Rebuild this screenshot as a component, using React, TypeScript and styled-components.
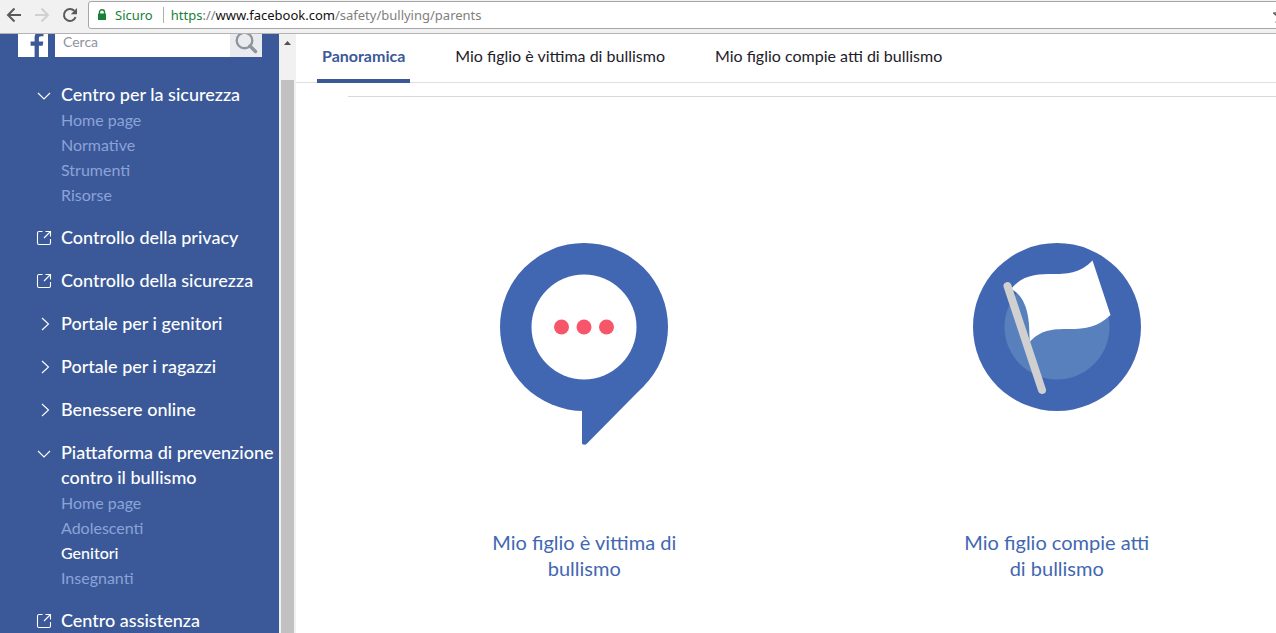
import React, { useState } from "react";
import styled, { createGlobalStyle } from "styled-components";

const GlobalStyle = createGlobalStyle`
  *, *::before, *::after { box-sizing: border-box; }
  body { margin: 0; background: #fff; font-family: "Noto Sans", "Open Sans", sans-serif; }
  button, input { font-family: inherit; }
  a { text-decoration: none; }
`;

const Browser = styled.div`
  display: flex;
  flex-direction: column;
  height: 100vh;
  overflow: hidden;
`;

const Toolbar = styled.header`
  display: flex;
  flex: none;
  height: 34px;
  padding: 1px 0 4px 5px;
  overflow: hidden;
  background: #f2f1f2;
  border-bottom: 1px solid #b3b3b3;
`;

const ToolButton = styled.button`
  display: flex;
  align-items: center;
  justify-content: center;
  width: 28px;
  padding: 0 10px 0 0;
  border: 0;
  background: none;
  color: #5a5a5a;
  &:disabled { color: #d0d0d0; }
`;

const AddressBar = styled.div`
  display: flex;
  flex: 1;
  align-items: center;
  margin: 0 -14px 0 -1px;
  padding: 0 0 0 8px;
  border: 1px solid #a6a6a6;
  border-radius: 3px;
  background: #fff;
  font-size: 13px;
  line-height: 18px;
  color: #808080;
`;

const Secure = styled.button`
  display: flex;
  align-items: center;
  gap: 8px;
  padding: 0 10px 0 0;
  border: 0;
  border-right: 1px solid #b0b0b0;
  background: none;
  font-size: 13px;
  line-height: 16px;
  color: #188038;
`;

const Url = styled.div`
  flex: 1;
  padding-left: 7px;
  white-space: nowrap;
`;

const Scheme = styled.span`color: #188038;`;
const Host = styled.span`color: #111;`;

const StarButton = styled.button`
  display: flex;
  padding: 0;
  border: 0;
  background: none;
`;

const Page = styled.div`
  display: flex;
  flex: 1;
  min-height: 0;
  font-family: Lato, "Noto Sans", sans-serif;
`;

const Sidebar = styled.aside`
  flex: none;
  width: 279px;
  overflow: hidden;
  background: #3b5998;
`;

const SearchRow = styled.form`
  display: flex;
  align-items: flex-end;
  height: 23px;
  padding: 0 17px 0 18px;
  overflow: hidden;
`;

const LogoLink = styled.a`
  display: flex;
  margin-right: 7px;
`;

const SearchInput = styled.input`
  flex: 1;
  min-width: 0;
  height: 30px;
  padding: 0 8px 2px;
  border: 0;
  background: #fff;
  font-size: 14px;
  &::placeholder { color: #90949c; opacity: 1; }
`;

const SearchButton = styled.button`
  display: flex;
  align-items: center;
  justify-content: center;
  width: 32px;
  height: 30px;
  padding: 0;
  border: 0;
  background: #e9ebee;
`;

const Nav = styled.nav`
  display: flex;
  flex-direction: column;
  gap: 18px;
  padding: 25px 0 0 36px;
`;

const Section = styled.div`
  display: flex;
  flex-direction: column;
`;

const SectionHead = styled.button`
  display: flex;
  align-items: flex-start;
  padding: 0;
  border: 0;
  background: none;
  color: #fff;
  font-size: 18px;
  font-weight: 500;
  line-height: 25px;
  text-align: left;
  white-space: pre;
  cursor: pointer;
`;

const IconBox = styled.span`
  display: flex;
  flex: none;
  align-items: center;
  width: 25px;
  height: 25px;
`;

const SubLink = styled.a<{ $current?: boolean }>`
  padding-left: 25px;
  color: ${(p) => (p.$current ? "#fff" : "#8ba3d9")};
  font-size: 16px;
  font-weight: ${(p) => (p.$current ? 500 : 400)};
  line-height: 25px;
`;

const ScrollTrack = styled.div`
  display: flex;
  flex-direction: column;
  align-items: center;
  flex: none;
  width: 17px;
  background: #f1f1f1;
`;

const ScrollUp = styled.button`
  display: flex;
  align-items: center;
  justify-content: center;
  height: 18px;
  width: 17px;
  padding: 0;
  border: 0;
  background: none;
`;

const ScrollThumb = styled.div`
  flex: 1;
  width: 13px;
  margin-top: 28px;
  background: #c1c1c1;
`;

const Content = styled.main`
  flex: 1;
  min-width: 0;
  overflow: hidden;
`;

const Tabs = styled.nav`
  display: flex;
  gap: 40px;
  height: 49px;
  padding-left: 21px;
  border-bottom: 1px solid #dddfe2;
`;

const Tab = styled.a<{ $active?: boolean }>`
  height: 49px;
  padding: 9px 5px 0;
  border-bottom: 4px solid ${(p) => (p.$active ? "#3b5998" : "transparent")};
  color: ${(p) => (p.$active ? "#3b5998" : "#1d2129")};
  font-size: 16px;
  font-weight: ${(p) => (p.$active ? 700 : 400)};
  line-height: 25px;
  white-space: nowrap;
`;

const Cards = styled.section`
  display: grid;
  grid-template-columns: 1fr 1fr;
  margin: 13px -17px 0 52px;
  padding-top: 146px;
  border-top: 1px solid #d8d8d8;
`;

const Card = styled.a`
  display: flex;
  flex-direction: column;
  align-items: center;
  gap: 84px;
  color: #4267b2;
`;

const CardTitle = styled.h2`
  width: 200px;
  margin: 0;
  font-size: 20px;
  font-weight: 400;
  line-height: 26px;
  text-align: center;
`;

const BackIcon = () => (
  <svg width="16" height="16" viewBox="0 0 16 16" fill="none" stroke="currentColor" strokeWidth="2" aria-hidden="true">
    <path d="M15 8H2.500M8.500 1.500L2 8l6.500 6.500" />
  </svg>
);
const ForwardIcon = () => (
  <svg width="16" height="16" viewBox="0 0 16 16" fill="none" stroke="currentColor" strokeWidth="2" aria-hidden="true">
    <path d="M1 8h12.500M7.500 1.500L14 8l-6.500 6.500" />
  </svg>
);
const ReloadIcon = () => (
  <svg width="16" height="16" viewBox="0 0 16 16" aria-hidden="true">
    <path d="M13.600 10A6 6 0 1 1 12.300 3.800" fill="none" stroke="currentColor" strokeWidth="2" />
    <path d="M15 1v6.200H8.800z" fill="currentColor" />
  </svg>
);
const LockIcon = () => (
  <svg width="10" height="12" viewBox="0 0 10 12" aria-hidden="true">
    <path d="M2.500 6V3.200a2.500 2.500 0 0 1 5 0V6" fill="none" stroke="#188038" strokeWidth="1.400" />
    <rect x="1" y="4.500" width="8" height="6.500" rx="0.600" fill="#188038" />
  </svg>
);
const StarIcon = () => (
  <svg width="16" height="16" viewBox="0 0 16 16" fill="none" stroke="#5a5a5a" strokeWidth="1.500" aria-hidden="true">
    <path d="M8 1l2.100 4.700 5.100.5-3.900 3.400 1.200 5L8 12l-4.500 2.600 1.200-5L.8 6.200l5.100-.5z" />
  </svg>
);
const LogoIcon = () => (
  <svg width="30" height="30" viewBox="0 0 30 30" aria-hidden="true">
    <path d="M0 0h30v30H0z" fill="#fff" />
    <path d="M16.600 30V18.700h-4v-4.200h4v-3.900c0-4 2.400-6.100 6-6.100 1.400 0 2.500.1 2.900.2v4.500h-2.300c-1.900 0-2.300.9-2.300 2.300v3h4.400l-.6 4.200h-3.800V30z" fill="#3b5998" />
  </svg>
);
const SearchIcon = () => (
  <svg width="24" height="24" viewBox="0 0 24 24" fill="none" stroke="#90949c" aria-hidden="true">
    <circle cx="10.500" cy="10.500" r="7.800" strokeWidth="2.400" />
    <path d="M16 16l5.500 5.500" strokeWidth="3.400" strokeLinecap="round" />
  </svg>
);
const DownIcon = () => (
  <svg width="16" height="16" viewBox="0 0 16 16" fill="none" stroke="#fff" strokeWidth="1.100" aria-hidden="true">
    <path d="M2 6l6 6 6-6" />
  </svg>
);
const RightIcon = () => (
  <svg width="16" height="16" viewBox="0 0 16 16" fill="none" stroke="#fff" strokeWidth="1.100" aria-hidden="true">
    <path d="M6 2l6.500 6L6 14" />
  </svg>
);
const ExternalIcon = () => (
  <svg width="16" height="16" viewBox="0 0 16 16" fill="none" stroke="#fff" strokeWidth="1.100" aria-hidden="true">
    <path d="M6.500 1.500H3q-1.500 0-1.500 1.500v10q0 1.500 1.500 1.500h10q1.500 0 1.500-1.500V9M9.500 1.500h5v5M14.500 1.500L8 8" />
  </svg>
);
const ArrowUpIcon = () => (
  <svg width="7" height="4" viewBox="0 0 7 4" aria-hidden="true">
    <path d="M0 4L3.500 0 7 4z" fill="#505050" />
  </svg>
);
const BubblePicture = () => (
  <svg width="168" height="202" viewBox="0 0 168 202" aria-hidden="true">
    <circle cx="84" cy="84" r="84" fill="#4267b2" />
    <path d="M84 84L144 142.800L87 200.500q-2 2-4.500.8-.5-.5-.5-1.500V84z" fill="#4267b2" />
    <circle cx="84" cy="84" r="52.500" fill="#fff" />
    <circle cx="61.500" cy="84" r="7.500" fill="#f7566a" />
    <circle cx="84" cy="84" r="7.500" fill="#f7566a" />
    <circle cx="106.500" cy="84" r="7.500" fill="#f7566a" />
  </svg>
);
const FlagPicture = () => (
  <svg width="168" height="202" viewBox="0 0 168 202" aria-hidden="true">
    <circle cx="84" cy="84" r="84" fill="#4267b2" />
    <circle cx="84" cy="84" r="52.500" fill="#5880bd" />
    <path d="M38 46C50 31 66 31 80 31C98 31 108 29 119.500 17.500L137.500 72C125 84 113 86 96 86C78 86 68 87 56.500 99C57 78 55 54 38 46z" fill="#fff" />
    <path d="M34.500 43L69 147" stroke="#d0d0d0" strokeWidth="8" strokeLinecap="round" />
  </svg>
);

type Kind = "group" | "external";
interface Entry {
  title: string;
  kind: Kind;
  links?: string[];
}

const entries: Entry[] = [
  { title: "Centro per la sicurezza", kind: "group", links: ["Home page", "Normative", "Strumenti", "Risorse"] },
  { title: "Controllo della privacy", kind: "external" },
  { title: "Controllo della sicurezza", kind: "external" },
  { title: "Portale per i genitori", kind: "group" },
  { title: "Portale per i ragazzi", kind: "group" },
  { title: "Benessere online", kind: "group" },
  {
    title: "Piattaforma di prevenzione\ncontro il bullismo",
    kind: "group",
    links: ["Home page", "Adolescenti", "Genitori", "Insegnanti"],
  },
  { title: "Centro assistenza", kind: "external" },
];

function NavSection({ entry }: { entry: Entry }) {
  const [open, setOpen] = useState(Boolean(entry.links));
  const external = entry.kind === "external";
  return (
    <Section>
      <SectionHead
        {...(external
          ? { as: "a" as const, href: "#" }
          : { type: "button" as const, "aria-expanded": open, onClick: () => setOpen(!open) })}
      >
        <IconBox>{external ? <ExternalIcon /> : open ? <DownIcon /> : <RightIcon />}</IconBox>
        {entry.title}
      </SectionHead>
      {open &&
        entry.links?.map((link) => (
          <SubLink key={link} href="#" $current={link === "Genitori"}>
            {link}
          </SubLink>
        ))}
    </Section>
  );
}

export default function App() {
  return (
    <Browser>
      <GlobalStyle />
      <Toolbar>
        <ToolButton aria-label="Indietro"><BackIcon /></ToolButton>
        <ToolButton aria-label="Avanti" disabled><ForwardIcon /></ToolButton>
        <ToolButton aria-label="Ricarica"><ReloadIcon /></ToolButton>
        <AddressBar>
          <Secure><LockIcon />Sicuro</Secure>
          <Url>
            <Scheme>https</Scheme>://<Host>www.facebook.com</Host>/safety/bullying/parents
          </Url>
          <StarButton aria-label="Preferiti"><StarIcon /></StarButton>
        </AddressBar>
      </Toolbar>
      <Page>
        <Sidebar>
          <SearchRow role="search">
            <LogoLink href="#" aria-label="Facebook"><LogoIcon /></LogoLink>
            <SearchInput type="text" placeholder="Cerca" aria-label="Cerca" />
            <SearchButton type="button" aria-label="Avvia ricerca"><SearchIcon /></SearchButton>
          </SearchRow>
          <Nav>
            {entries.map((entry) => (
              <NavSection key={entry.title} entry={entry} />
            ))}
          </Nav>
        </Sidebar>
        <ScrollTrack>
          <ScrollUp aria-label="Scorri in alto"><ArrowUpIcon /></ScrollUp>
          <ScrollThumb />
        </ScrollTrack>
        <Content>
          <Tabs>
            <Tab href="#" $active>Panoramica</Tab>
            <Tab href="#">Mio figlio è vittima di bullismo</Tab>
            <Tab href="#">Mio figlio compie atti di bullismo</Tab>
          </Tabs>
          <Cards>
            <Card href="#">
              <BubblePicture />
              <CardTitle>Mio figlio è vittima di bullismo</CardTitle>
            </Card>
            <Card href="#">
              <FlagPicture />
              <CardTitle>Mio figlio compie atti di bullismo</CardTitle>
            </Card>
          </Cards>
        </Content>
      </Page>
    </Browser>
  );
}
